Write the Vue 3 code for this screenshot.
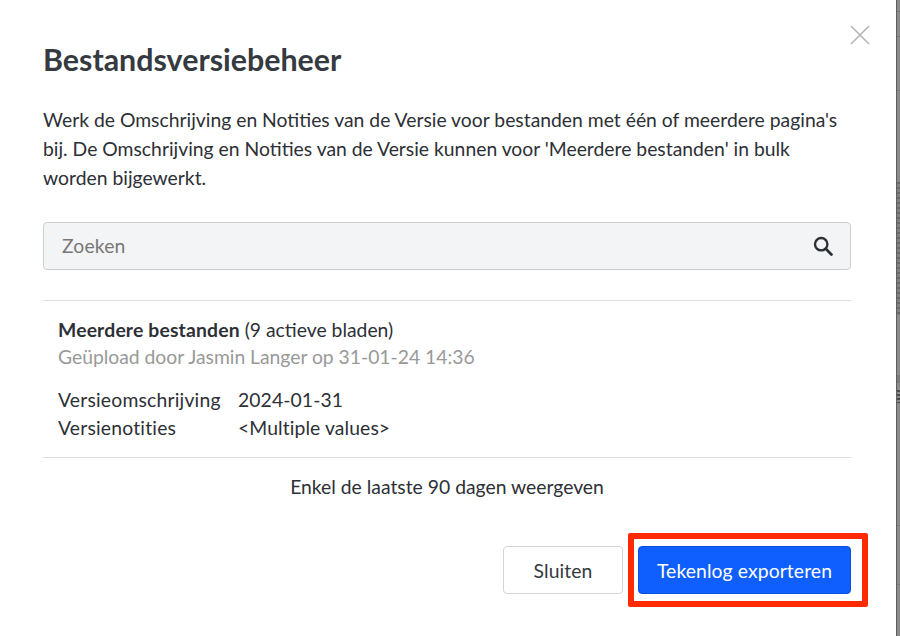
<script setup>
const details = [
  { label: 'Versieomschrijving', value: '2024-01-31' },
  { label: 'Versienotities', value: '<Multiple values>' },
]
</script>

<template>
  <div class="page">
    <section class="modal">
      <svg class="close" width="20" height="20" viewBox="0 0 20 20">
        <path d="M1 1 L19 19 M19 1 L1 19" stroke="#b4b4b4" stroke-width="1.6" fill="none" />
      </svg>
      <h1 class="title">Bestandsversiebeheer</h1>
      <p class="intro">Werk de Omschrijving en Notities van de Versie voor bestanden met één of meerdere pagina's bij. De Omschrijving en Notities van de Versie kunnen voor 'Meerdere bestanden' in bulk worden bijgewerkt.</p>
      <div class="search">
        <span class="placeholder">Zoeken</span>
        <svg width="20" height="20" viewBox="0 0 20 20">
          <circle cx="8.2" cy="8.2" r="6.2" stroke="#2d3036" stroke-width="2.4" fill="none" />
          <path d="M12.8 12.8 L18.4 18.4" stroke="#2d3036" stroke-width="2.8" stroke-linecap="round" />
        </svg>
      </div>
      <div class="entry">
        <div class="entry-title"><strong>Meerdere bestanden</strong> (9 actieve bladen)</div>
        <div class="entry-sub">Geüpload door Jasmin Langer op 31-01-24 14:36</div>
        <dl class="details">
          <template v-for="d in details" :key="d.label">
            <dt>{{ d.label }}</dt>
            <dd>{{ d.value }}</dd>
          </template>
        </dl>
      </div>
      <p class="limit">Enkel de laatste 90 dagen weergeven</p>
      <div class="actions">
        <button class="btn">Sluiten</button>
        <button class="btn primary">Tekenlog exporteren
          <span class="highlight"></span>
        </button>
      </div>
    </section>
    <aside class="backdrop"></aside>
  </div>
</template>

<style>
html, body { margin: 0; padding: 0; background: #fff; }
</style>

<style scoped>
.page {
  display: flex;
  width: 900px;
  height: 636px;
  overflow: hidden;
  font-family: Lato, "Liberation Sans", sans-serif;
  font-size: 19.33px;
  color: #2d3036;
}
.modal {
  position: relative;
  box-sizing: border-box;
  width: 896px;
  height: 636px;
  padding: 0 45px 0 43px;
  background: #fff;
}
.backdrop {
  flex: 1;
  border-left: 1px solid #5e5e5e;
  background:
    linear-gradient(#777, #777) 0 11px / 100% 1px no-repeat,
    linear-gradient(#777, #777) 0 36px / 100% 1px no-repeat,
    linear-gradient(#7c7c7c, #7c7c7c) 0 90px / 100% 1px no-repeat,
    linear-gradient(#7c7c7c, #7c7c7c) 0 375px / 100% 8px no-repeat,
    repeating-linear-gradient(#4d4d4d 0 2px, #8c8c8c 2px 4px) 0 390px / 100% 13px no-repeat,
    linear-gradient(#7a7a7a, #7a7a7a) 0 525px / 100% 1px no-repeat,
    linear-gradient(#7a7a7a, #7a7a7a) 0 584px / 100% 1px no-repeat,
    repeating-linear-gradient(#6c6c6c 0 2px, #828282 2px 5px) 0 182px / 100% 133px no-repeat,
    #8c8c8c;
}
.close {
  position: absolute;
  top: 25px;
  right: 26px;
}
.title {
  margin: 0;
  padding-top: 41px;
  font-size: 30.4px;
  line-height: 36px;
  font-weight: 700;
  color: #343a40;
}
.intro {
  margin: 29px 0 0;
  line-height: 28.8px;
}
.search {
  display: flex;
  align-items: center;
  justify-content: space-between;
  box-sizing: border-box;
  height: 48px;
  margin-top: 30px;
  padding: 0 17px 0 18px;
  background: #f3f4f6;
  border: 1px solid #cfcfcf;
  border-radius: 4px;
}
.placeholder { color: #777; margin-top: -2px; letter-spacing: 0.15px; }
.entry {
  margin-top: 30px;
  padding: 15px 15px 16px;
  border-top: 1px solid #dedede;
  border-bottom: 1px solid #dedede;
  line-height: 27.7px;
}
.entry-title strong { font-weight: 700; letter-spacing: 0.17px; }
.entry-sub { color: #999; margin-top: -1px; letter-spacing: -0.02px; }
.details {
  display: grid;
  grid-template-columns: 180px 1fr;
  margin: 15px 0 0;
}
.details dt, .details dd { margin: 0; }
.details dt { letter-spacing: 0.2px; }
.details dd { letter-spacing: 0.1px; }
.limit {
  margin: 15px 0 0;
  text-align: center;
  line-height: 28px;
}
.actions {
  display: flex;
  justify-content: flex-end;
  gap: 15px;
  margin-top: 45px;
}
.btn {
  position: relative;
  box-sizing: border-box;
  width: 120px;
  height: 48px;
  padding: 0;
  background: #fff;
  border: 1px solid #d5d5d5;
  border-radius: 4px;
  font: inherit;
  letter-spacing: 0.1px;
  color: #343a40;
}
.btn.primary {
  width: 213px;
  background: #0f5fff;
  border-color: #0b50d8;
  color: #fff;
}
.highlight {
  position: absolute;
  left: -11px;
  top: -14px;
  width: 240px;
  height: 74px;
  box-sizing: border-box;
  border: 6px solid #ff2a00;
  border-radius: 2px;
  pointer-events: none;
}
</style>
